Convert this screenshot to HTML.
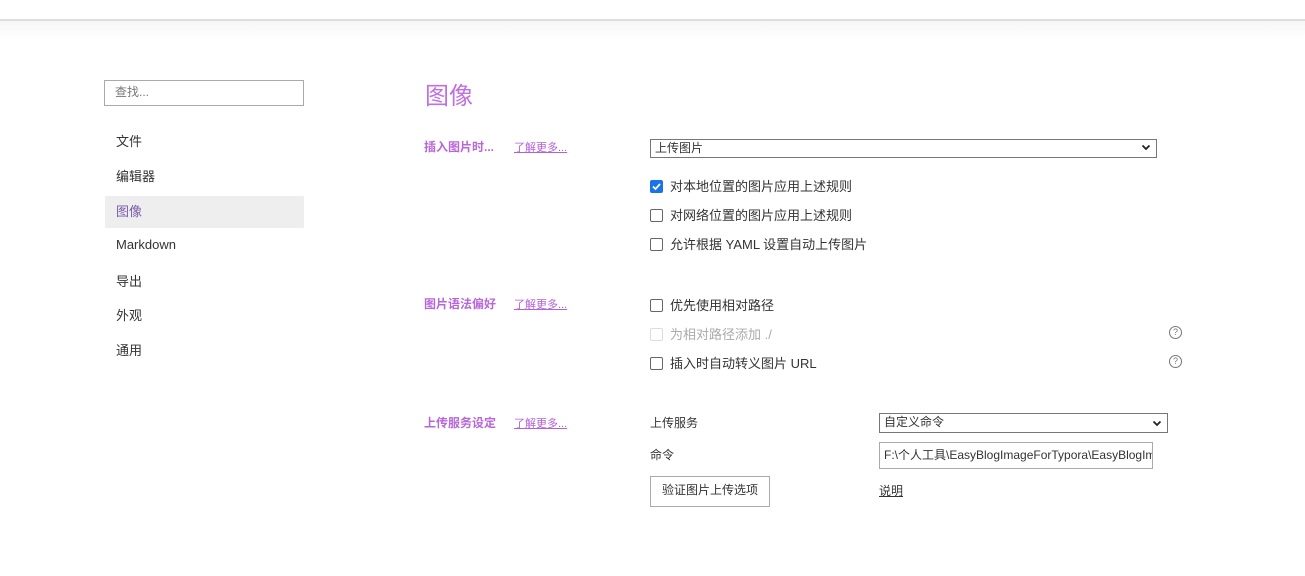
<!DOCTYPE html>
<html><head><meta charset="utf-8"><style>
body{margin:0;width:1305px;height:576px;background:#fff;font-family:"Liberation Sans","Noto Sans CJK SC",sans-serif;color:#333;position:relative;overflow:hidden;font-size:13px}
.a{position:absolute;white-space:nowrap}
.top{position:absolute;left:0;top:19px;width:1305px;height:2px;background:#ddd}
.sh{position:absolute;left:0;top:21px;width:1305px;height:18px;background:linear-gradient(#f6f6f6,#fff)}
.search{position:absolute;left:104px;top:80px;width:198px;height:24px;border:1px solid #aaa;font-size:12px;color:#777;line-height:22px;box-sizing:content-box}
.nav{position:absolute;left:116px;font-size:13px;color:#333}
.sel{position:absolute;left:105px;top:196px;width:199px;height:32px;background:#eee;border-radius:2px}
.pl{color:#b866d8;font-size:12px;font-weight:bold}
.lk{color:#b35fd6;font-size:11px;text-decoration:underline}
.cb{position:absolute;width:11px;height:11px;border:1px solid #666;border-radius:2px;background:#fff}
.sel2{position:absolute;border:1px solid #777;background:#fff;font-size:12px;line-height:16px;padding-left:4px;box-sizing:border-box;white-space:nowrap}
.chev{position:absolute;right:5px;top:2px;width:10px;height:10px}
.q{position:absolute;width:11px;height:11px;border:1px solid #777;border-radius:50%;font-size:9px;line-height:11px;text-align:center;color:#777}
</style></head><body>
<div class="top"></div><div class="sh"></div>
<div class="search"><span style="margin-left:10px">查找...</span></div>
<div class="sel"></div>
<div class="nav" style="top:131px">文件</div>
<div class="nav" style="top:166px">编辑器</div>
<div class="nav" style="top:201px;color:#7a5aa8">图像</div>
<div class="nav" style="top:237px">Markdown</div>
<div class="nav" style="top:271px">导出</div>
<div class="nav" style="top:305px">外观</div>
<div class="nav" style="top:340px">通用</div>

<div class="a" style="left:425px;top:76px;font-size:24px;color:#c070e0">图像</div>

<div class="a pl" style="left:424px;top:138px">插入图片时...</div>
<div class="a lk" style="left:514px;top:139px">了解更多...</div>
<div class="sel2" style="left:650px;top:139px;width:507px;height:19px">上传图片<svg class="chev" viewBox="0 0 10 10"><path d="M1.5 3.5L5 7L8.5 3.5" stroke="#222" stroke-width="1.8" fill="none"/></svg></div>
<div class="cb" style="left:650px;top:180px;background:#1a73e8;border-color:#1a73e8"><svg viewBox="0 0 11 11" style="position:absolute;left:0;top:0;width:11px;height:11px"><path d="M2 5.5L4.5 8L9 3" stroke="#fff" stroke-width="1.8" fill="none"/></svg></div>
<div class="a" style="left:670px;top:176px">对本地位置的图片应用上述规则</div>
<div class="cb" style="left:650px;top:209px"></div>
<div class="a" style="left:670px;top:205px">对网络位置的图片应用上述规则</div>
<div class="cb" style="left:650px;top:238px"></div>
<div class="a" style="left:670px;top:234px">允许根据 YAML 设置自动上传图片</div>

<div class="a pl" style="left:424px;top:295px">图片语法偏好</div>
<div class="a lk" style="left:514px;top:296px">了解更多...</div>
<div class="cb" style="left:650px;top:299px"></div>
<div class="a" style="left:670px;top:295px">优先使用相对路径</div>
<div class="cb" style="left:650px;top:328px;border-color:#ddd"></div>
<div class="a" style="left:670px;top:324px;color:#aaa">为相对路径添加 ./</div>
<div class="q" style="left:1169px;top:326px">?</div>
<div class="cb" style="left:650px;top:357px"></div>
<div class="a" style="left:670px;top:353px">插入时自动转义图片 URL</div>
<div class="q" style="left:1169px;top:355px">?</div>

<div class="a pl" style="left:424px;top:414px">上传服务设定</div>
<div class="a lk" style="left:514px;top:415px">了解更多...</div>
<div class="a" style="left:650px;top:414px;font-size:12px">上传服务</div>
<div class="sel2" style="left:879px;top:413px;width:289px;height:20px;line-height:16px">自定义命令<svg class="chev" style="top:4px" viewBox="0 0 10 10"><path d="M1.5 3.5L5 7L8.5 3.5" stroke="#222" stroke-width="1.8" fill="none"/></svg></div>
<div class="a" style="left:650px;top:446px;font-size:12px">命令</div>
<div class="sel2" style="left:879px;top:442px;width:274px;height:27px;line-height:24px;border-color:#aaa;overflow:hidden">F:\个人工具\EasyBlogImageForTypora\EasyBlogImageForTypora</div>
<div class="a" style="left:650px;top:476px;width:118px;height:29px;border:1px solid #aaa;font-size:12px;line-height:27px;text-align:center">验证图片上传选项</div>
<div class="a" style="left:879px;top:482px;font-size:12px;text-decoration:underline">说明</div>
</body></html>
